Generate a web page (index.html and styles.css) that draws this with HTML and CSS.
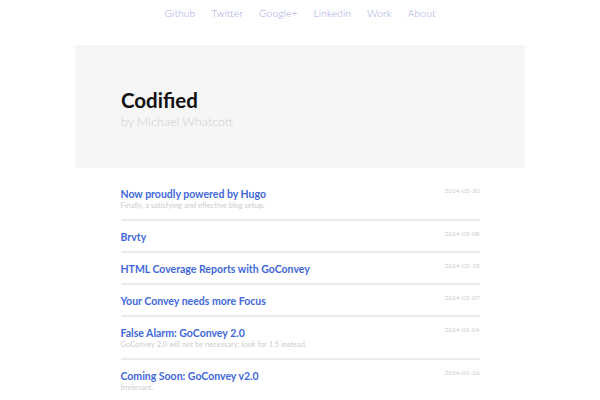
FILE: index.html
```html
<!DOCTYPE html>
<html>
<head>
<meta charset="utf-8">
<link rel="stylesheet" href="styles.css">
</head>
<body>
<nav class="nav">
  <a href="#">Github</a>
  <a href="#">Twitter</a>
  <a href="#">Google+</a>
  <a href="#">Linkedin</a>
  <a href="#">Work</a>
  <a href="#">About</a>
</nav>
<header class="hero">
  <h1 class="hero-title">Codified</h1>
  <p class="hero-sub">by Michael Whatcott</p>
</header>
<ul class="posts">
  <li class="post">
    <div class="post-main"><a class="post-title" href="#">Now proudly powered by Hugo</a><span class="post-desc">Finally, a satisfying and effective blog setup.</span></div>
    <span class="post-date">2014-05-20</span>
  </li>
  <li class="post">
    <div class="post-main"><a class="post-title" href="#">Brvty</a></div>
    <span class="post-date">2014-03-08</span>
  </li>
  <li class="post">
    <div class="post-main"><a class="post-title" href="#">HTML Coverage Reports with GoConvey</a></div>
    <span class="post-date">2014-02-18</span>
  </li>
  <li class="post">
    <div class="post-main"><a class="post-title" href="#">Your Convey needs more Focus</a></div>
    <span class="post-date">2014-02-07</span>
  </li>
  <li class="post">
    <div class="post-main"><a class="post-title" href="#">False Alarm: GoConvey 2.0</a><span class="post-desc">GoConvey 2.0 will not be necessary; look for 1.5 instead.</span></div>
    <span class="post-date">2014-01-04</span>
  </li>
  <li class="post">
    <div class="post-main"><a class="post-title" href="#">Coming Soon: GoConvey v2.0</a><span class="post-desc">Irrelevant.</span></div>
    <span class="post-date">2014-01-26</span>
  </li>
</ul>
</body>
</html>
```
FILE: styles.css
```css
html, body {
  margin: 0;
  padding: 0;
  background: #fff;
}
body {
  font-family: "Lato", "Open Sans", sans-serif;
  overflow: hidden;
}
a { text-decoration: none; }
.nav {
  display: flex;
  justify-content: center;
  gap: 16px;
  padding-top: 7px;
  height: 45px;
  box-sizing: border-box;
  font-size: 10.5px;
  line-height: 13px;
  font-weight: 300;
}
.nav a { color: #9fa8e6; }
.hero {
  width: 450px;
  height: 123px;
  margin: 0 auto;
  box-sizing: border-box;
  padding: 43px 46px 0;
  background: #f6f6f6;
}
.hero-title {
  margin: 0;
  font-size: 20.5px;
  line-height: 24px;
  font-weight: 700;
  color: #111;
}
.hero-sub {
  margin: 2px 0 0;
  font-size: 12.5px;
  line-height: 16px;
  font-weight: 300;
  color: #cfcfcf;
}
.posts {
  list-style: none;
  width: 359px;
  margin: 10px auto 0;
  padding: 0;
}
.post {
  display: flex;
  justify-content: space-between;
  align-items: flex-start;
  padding: 10px 0 8px;
  border-bottom: 2px solid #ececec;
}
.post:last-child { border-bottom: none; }
.post-main {
  display: flex;
  flex-direction: column;
}
.post-title {
  font-size: 10.5px;
  line-height: 12px;
  font-weight: 700;
  color: #4168d8;
}
.post-desc {
  font-size: 7.5px;
  line-height: 11px;
  color: #cccccc;
}
.post-date {
  font-size: 6.5px;
  line-height: 8px;
  color: #cccccc;
  margin-top: -1px;
}
```
